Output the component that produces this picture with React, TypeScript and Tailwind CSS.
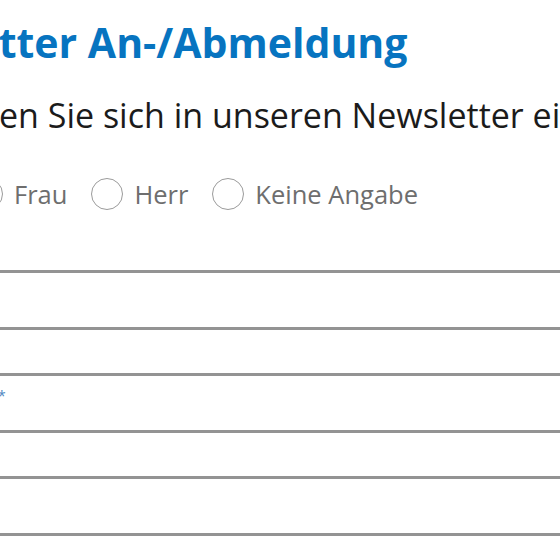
import React from "react";

const salutations = ["Frau", "Herr", "Keine Angabe"];

const fields = [
  { name: "vorname", label: "Vorname", required: false },
  { name: "email", label: "E-Mail", required: true },
  { name: "nachname", label: "Nachname", required: false },
];

export default function App() {
  return (
    <div className="w-[560px] h-[560px] overflow-hidden bg-white font-['Open_Sans',sans-serif]">
      {/* Heading */}
      <h1 className="pt-[17px] -ml-[151px] whitespace-nowrap text-[41px] leading-[50px] font-bold text-[#0774c0]">
        Newsletter An-/Abmeldung
      </h1>

      <p className="mt-[28px] -ml-[71px] whitespace-nowrap text-[34px] leading-[40px] text-[#1b1b1b]">
        Tragen Sie sich in unseren Newsletter ein
      </p>

      {/* Salutation */}
      <div className="mt-[43px] -ml-[29px] flex h-[32px] items-center gap-[24px] whitespace-nowrap">
        {salutations.map((s) => (
          <label key={s} className="flex items-center gap-[11px]">
            <input
              type="radio"
              name="anrede"
              className="h-[32px] w-[32px] appearance-none rounded-full border-[1.5px] border-[#9b9b9b] bg-white"
            />
            <span className="text-[25.5px] leading-[32px] text-[#6e6e6e]">{s}</span>
          </label>
        ))}
      </div>

      {/* Fields */}
      <div className="mt-[60px] -ml-[60px] flex w-[700px] flex-col gap-[43px]">
        {fields.map((f) => (
          <label
            key={f.name}
            className="flex h-[60px] border-[3px] border-[#939393] bg-white"
          >
            <span className="flex w-[55px] shrink-0 justify-end whitespace-nowrap pt-[10px] text-[16px] leading-[20px] text-[#6e6e6e]">
              {f.label}
            </span>
            <span className="w-[6px] shrink-0 pt-[10px] text-[14px] leading-[20px] text-[#4f86bf]">
              {f.required ? "*" : ""}
            </span>
            <input type="text" name={f.name} className="flex-1 bg-transparent outline-none" />
          </label>
        ))}
      </div>
    </div>
  );
}
